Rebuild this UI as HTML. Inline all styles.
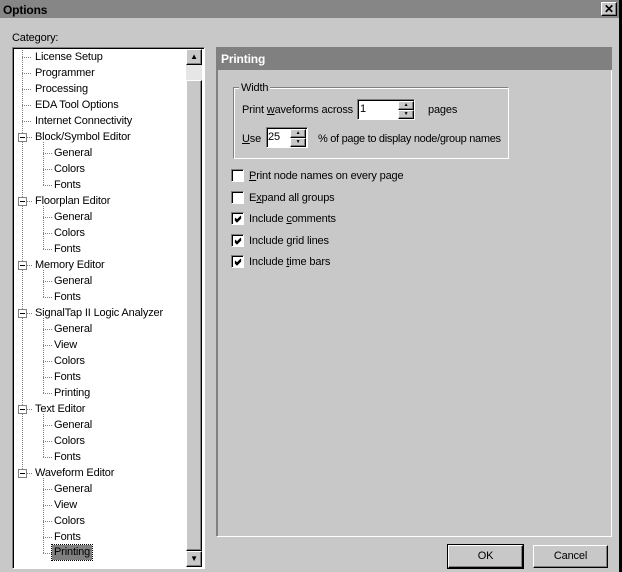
<!DOCTYPE html>
<html><head><style>
*{margin:0;padding:0;box-sizing:border-box}
body{width:622px;height:572px;background:#c8c8c8;font-family:"Liberation Sans",sans-serif;font-size:11px;letter-spacing:-0.15px;color:#000;position:relative;overflow:hidden}
.a{position:absolute}
.t{position:absolute;white-space:nowrap;line-height:16px;height:16px}
.btn{position:absolute;background:#c8c8c8;border:1px solid;border-color:#fff #000 #000 #fff;box-shadow:inset -1px -1px 0 #808080;text-align:center}
.cb{position:absolute;width:13px;height:13px;background:#fff;border:1px solid;border-color:#808080 #fff #fff #808080;box-shadow:inset 1px 1px 0 #000}
.cb svg{position:absolute;left:2px;top:2px}
u{text-decoration:underline}
</style></head><body>
<div class="a" style="left:0;top:0;width:622px;height:18px;background:#868686"></div>
<div class="t" style="left:3px;top:2px;font-weight:bold;font-size:12px;color:#000">Options</div>
<div class="btn" style="left:601px;top:2px;width:16px;height:14px;line-height:12px;font-weight:bold;font-size:12px">✕</div>
<div class="a" style="left:619px;top:0;width:3px;height:572px;background:#000"></div>
<div class="t" style="left:12px;top:30px">Category:</div>

<div class="a" style="left:12px;top:47px;width:193px;height:522px;border:1px solid;border-color:#808080 #fff #fff #808080;box-shadow:inset 1px 1px 0 #000;background:#fff"></div>
<div class="a" style="left:186px;top:49px;width:16px;height:518px;background:#e6e6e6"></div>
<div class="btn" style="left:186px;top:49px;width:16px;height:16px;font-size:8px;line-height:14px">▲</div>
<div class="btn" style="left:186px;top:80px;width:16px;height:471px"></div>
<div class="btn" style="left:186px;top:551px;width:16px;height:16px;font-size:8px;line-height:14px">▼</div>

<svg class="a" style="left:0;top:0" width="186" height="572">
<g stroke="#808080" stroke-width="1" stroke-dasharray="1 1" fill="none">
<line x1="22.5" y1="50" x2="22.5" y2="473"/>
<line x1="22" y1="57.5" x2="32" y2="57.5"/><line x1="22" y1="73.5" x2="32" y2="73.5"/><line x1="22" y1="89.5" x2="32" y2="89.5"/><line x1="22" y1="105.5" x2="32" y2="105.5"/><line x1="22" y1="121.5" x2="32" y2="121.5"/>
<line x1="27" y1="137.5" x2="32" y2="137.5"/><line x1="27" y1="201.5" x2="32" y2="201.5"/><line x1="27" y1="265.5" x2="32" y2="265.5"/><line x1="27" y1="313.5" x2="32" y2="313.5"/><line x1="27" y1="409.5" x2="32" y2="409.5"/><line x1="27" y1="473.5" x2="32" y2="473.5"/>
<line x1="43.5" y1="142" x2="43.5" y2="185"/><line x1="43.5" y1="206" x2="43.5" y2="249"/><line x1="43.5" y1="270" x2="43.5" y2="297"/><line x1="43.5" y1="318" x2="43.5" y2="393"/><line x1="43.5" y1="414" x2="43.5" y2="457"/><line x1="43.5" y1="478" x2="43.5" y2="553"/>
<path d="M43 153.5h9M43 169.5h9M43 185.5h9M43 217.5h9M43 233.5h9M43 249.5h9M43 281.5h9M43 297.5h9M43 329.5h9M43 345.5h9M43 361.5h9M43 377.5h9M43 393.5h9M43 425.5h9M43 441.5h9M43 457.5h9M43 489.5h9M43 505.5h9M43 521.5h9M43 537.5h9M43 553.5h9"/>
</g>
<g fill="#fff" stroke="#808080"><rect x="18.5" y="133.5" width="8" height="8"/><rect x="18.5" y="197.5" width="8" height="8"/><rect x="18.5" y="261.5" width="8" height="8"/><rect x="18.5" y="309.5" width="8" height="8"/><rect x="18.5" y="405.5" width="8" height="8"/><rect x="18.5" y="469.5" width="8" height="8"/></g>
<g stroke="#000"><path d="M20 137.5h5M20 201.5h5M20 265.5h5M20 313.5h5M20 409.5h5M20 473.5h5"/></g>
</svg>
<div class="t" style="left:35px;top:49px">License Setup</div>
<div class="t" style="left:35px;top:65px">Programmer</div>
<div class="t" style="left:35px;top:81px">Processing</div>
<div class="t" style="left:35px;top:97px">EDA Tool Options</div>
<div class="t" style="left:35px;top:113px">Internet Connectivity</div>
<div class="t" style="left:35px;top:129px">Block/Symbol Editor</div>
<div class="t" style="left:54px;top:145px">General</div>
<div class="t" style="left:54px;top:161px">Colors</div>
<div class="t" style="left:54px;top:177px">Fonts</div>
<div class="t" style="left:35px;top:193px">Floorplan Editor</div>
<div class="t" style="left:54px;top:209px">General</div>
<div class="t" style="left:54px;top:225px">Colors</div>
<div class="t" style="left:54px;top:241px">Fonts</div>
<div class="t" style="left:35px;top:257px">Memory Editor</div>
<div class="t" style="left:54px;top:273px">General</div>
<div class="t" style="left:54px;top:289px">Fonts</div>
<div class="t" style="left:35px;top:305px">SignalTap II Logic Analyzer</div>
<div class="t" style="left:54px;top:321px">General</div>
<div class="t" style="left:54px;top:337px">View</div>
<div class="t" style="left:54px;top:353px">Colors</div>
<div class="t" style="left:54px;top:369px">Fonts</div>
<div class="t" style="left:54px;top:385px">Printing</div>
<div class="t" style="left:35px;top:401px">Text Editor</div>
<div class="t" style="left:54px;top:417px">General</div>
<div class="t" style="left:54px;top:433px">Colors</div>
<div class="t" style="left:54px;top:449px">Fonts</div>
<div class="t" style="left:35px;top:465px">Waveform Editor</div>
<div class="t" style="left:54px;top:481px">General</div>
<div class="t" style="left:54px;top:497px">View</div>
<div class="t" style="left:54px;top:513px">Colors</div>
<div class="t" style="left:54px;top:529px">Fonts</div>
<div class="t" style="left:52px;top:545px;background:#808080;outline:1px dotted #000;padding:0 2px;height:15px;line-height:15px">Printing</div>

<div class="a" style="left:216px;top:47px;width:396px;height:490px;border:1px solid;border-color:#808080 #fff #fff #808080;box-shadow:1px 1px 0 #808080 inset"></div>
<div class="a" style="left:216px;top:47px;width:396px;height:23px;background:#808080"></div>
<div class="t" style="left:221px;top:51px;color:#fff;font-weight:bold;font-size:12px">Printing</div>

<div class="a" style="left:233px;top:87px;width:276px;height:72px;border:1px solid;border-color:#808080 #fff #fff #808080;box-shadow:inset 1px 1px 0 #fff,1px 1px 0 #808080 inset"></div>
<div class="t" style="left:239px;top:80px;background:#c8c8c8;padding:0 2px">Width</div>
<div class="t" style="left:242px;top:102px">Print <u>w</u>aveforms across</div>
<div class="cb" style="left:357px;top:99px;width:58px;height:21px"></div>
<div class="t" style="left:360px;top:101px">1</div>
<div class="btn" style="left:398px;top:101px;width:16px;height:9px;font-size:5px;line-height:7px">▲</div>
<div class="btn" style="left:398px;top:110px;width:16px;height:9px;font-size:5px;line-height:7px">▼</div>
<div class="t" style="left:428px;top:102px">pages</div>
<div class="t" style="left:242px;top:131px"><u>U</u>se</div>
<div class="cb" style="left:266px;top:127px;width:42px;height:21px"></div>
<div class="t" style="left:268px;top:129px">25</div>
<div class="btn" style="left:290px;top:129px;width:16px;height:9px;font-size:5px;line-height:7px">▲</div>
<div class="btn" style="left:290px;top:138px;width:16px;height:9px;font-size:5px;line-height:7px">▼</div>
<div class="t" style="left:318px;top:131px;letter-spacing:-0.3px">% of page to display node/group names</div>

<div class="cb" style="left:231px;top:169px"></div><div class="t" style="left:249px;top:168px"><u>P</u>rint node names on every page</div>
<div class="cb" style="left:231px;top:191px"></div><div class="t" style="left:249px;top:190px">E<u>x</u>pand all groups</div>
<div class="cb" style="left:231px;top:212px"><svg width="8" height="8"><path d="M1 3l2 2 4-4M1 4l2 2 4-4M1 5l2 2 4-4" stroke="#000" fill="none"/></svg></div><div class="t" style="left:249px;top:211px">Include <u>c</u>omments</div>
<div class="cb" style="left:231px;top:234px"><svg width="8" height="8"><path d="M1 3l2 2 4-4M1 4l2 2 4-4M1 5l2 2 4-4" stroke="#000" fill="none"/></svg></div><div class="t" style="left:249px;top:233px">Include <u>g</u>rid lines</div>
<div class="cb" style="left:231px;top:255px"><svg width="8" height="8"><path d="M1 3l2 2 4-4M1 4l2 2 4-4M1 5l2 2 4-4" stroke="#000" fill="none"/></svg></div><div class="t" style="left:249px;top:254px">Include <u>t</u>ime bars</div>

<div class="btn" style="left:448px;top:545px;width:75px;height:23px;line-height:21px;outline:1px solid #000">OK</div>
<div class="btn" style="left:533px;top:545px;width:75px;height:23px;line-height:21px">Cancel</div>
</body></html>
